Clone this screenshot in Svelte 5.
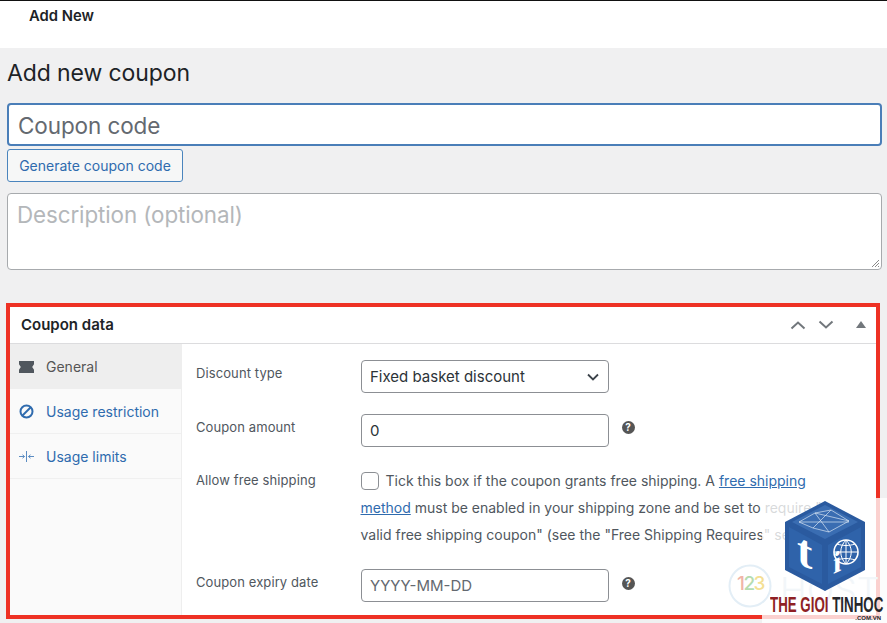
<script>
  const tabs = [
    { label: 'General', icon: 'ticket', active: true },
    { label: 'Usage restriction', icon: 'ban' },
    { label: 'Usage limits', icon: 'limits' }
  ];
</script>

<div class="page">
  <header class="topbar"><span>Add New</span></header>
  <main class="wrap">
    <h1>Add new coupon</h1>
    <div class="code-input">Coupon code</div>
    <button class="gen">Generate coupon code</button>
    <div class="desc">
      <span>Description (optional)</span>
      <svg class="grip" width="10" height="10" viewBox="0 0 10 10"><path d="M9 2 2 9M9 5 5 9M9 8 8 9" stroke="#8a8a8a" fill="none"/></svg>
    </div>

    <section class="box">
      <div class="box-head">
        <h2>Coupon data</h2>
        <div class="controls">
          <svg width="16" height="10" viewBox="0 0 16 10"><path d="M1.5 8.5 8 2.5l6.5 6" fill="none" stroke="#72777c" stroke-width="2"/></svg>
          <svg width="16" height="10" viewBox="0 0 16 10"><path d="M1.5 1.500 8 7.500l6.500-6" fill="none" stroke="#72777c" stroke-width="2"/></svg>
          <svg class="tri" width="10" height="7" viewBox="0 0 10 7"><path d="M5 0l5 7H0z" fill="#72777c"/></svg>
        </div>
      </div>
      <div class="box-body">
        <nav class="tabs">
          {#each tabs as t}
            <div class="tab" class:active={t.active}>
              <span class="ico">
                {#if t.icon === 'ticket'}
                  <svg width="15" height="12" viewBox="0 0 15 12"><path d="M0 0h15v3.200L13.200 6 15 8.800V12H0V8.800L1.800 6 0 3.200z" fill="#50575e"/></svg>
                {:else if t.icon === 'ban'}
                  <svg width="15" height="15" viewBox="0 0 15 15"><circle cx="7.500" cy="7.500" r="6" fill="none" stroke="#2f6bae" stroke-width="2"/><path d="M3.500 11.500l8-8" stroke="#2f6bae" stroke-width="2"/></svg>
                {:else}
                  <svg width="15" height="13" viewBox="0 0 15 13"><path d="M7.500 1v11M0 6.500h5.500M9.500 6.500H15M3.500 4.800l2 1.700-2 1.700M11.500 4.800l-2 1.700 2 1.700" fill="none" stroke="#5b8cc2"/></svg>
                {/if}
              </span>
              <span>{t.label}</span>
            </div>
          {/each}
        </nav>
        <div class="panel">
          <div class="row r1">
            <span class="lbl">Discount type</span>
            <div class="field select">
              <span>Fixed basket discount</span>
              <svg width="12" height="8" viewBox="0 0 12 8"><path d="M1 1.500l5 5 5-5" fill="none" stroke="#3c434a" stroke-width="1.800"/></svg>
            </div>
          </div>
          <div class="row r2">
            <span class="lbl">Coupon amount</span>
            <div class="field">0</div>
            <span class="help">?</span>
          </div>
          <div class="row r3">
            <span class="lbl">Allow free shipping</span>
            <p class="tick">
              <span class="check"></span>Tick this box if the coupon grants free shipping. A <a href="#a">free shipping method</a> must be enabled in your shipping zone and be set to require "a valid free shipping coupon" (see the "Free Shipping Requires" setting).
            </p>
          </div>
          <div class="row r4">
            <span class="lbl">Coupon expiry date</span>
            <div class="field ph">YYYY-MM-DD</div>
            <span class="help">?</span>
          </div>
        </div>
      </div>
    </section>
  </main>

  <div class="watermark">
    <div class="host">
      <svg width="46" height="46" viewBox="0 0 46 46"><circle cx="23" cy="23" r="20.500" fill="none" stroke="#e3eef6" stroke-width="2"/></svg>
      <span class="n123"><i class="a">1</i><i class="b">2</i><i class="c">3</i></span>
    </div>
    <span class="hosttext">HOST</span>
    <svg class="cube" width="80" height="90" viewBox="0 0 80 90">
      <path d="M40 0 80 21v48L40 90 0 69V21z" fill="#2a5a9f"/>
      <path d="M40 4 73 21 40 38 7 21z" fill="#3a6db2"/>
      <path d="M4 26 37 44v39L4 66z" fill="#2f63aa"/>
      <path d="M76 26 43 44v39l33-17z" fill="#2f63aa"/>
      <path d="M14 21 30 12 46 9 64 20 44 31 28 27zM30 12 44 31M46 9 28 27M14 21H64M30 12 64 20" fill="none" stroke="#d7e4f2" stroke-width=".7"/>
      <text class="logo-t" transform="matrix(1 .45 0 1 12 62)">t</text>
      <circle cx="61" cy="51" r="12" fill="none" stroke="#fff" stroke-width="1.600"/>
      <path d="M61 39v24M49 51h24M52 43c6 2 12 2 18 0M52 59c6-2 12-2 18 0M61 39c-7 7-7 17 0 24M61 39c7 7 7 17 0 24" fill="none" stroke="#fff" stroke-width="1"/>
      <text class="logo-i" transform="matrix(1 -.45 0 1 48 73)">i</text>
    </svg>
    <div class="brand"><b>THE GIOI</b> <b class="dark">TINHOC</b></div>
    <div class="vn">.COM.VN</div>
  </div>
</div>

<style>
  :global(body) { margin: 0; background: #f0f0f1; }
  .page {
    position: relative;
    width: 887px;
    height: 623px;
    overflow: hidden;
    font-family: Inter, "Liberation Sans", sans-serif;
    color: #3c434a;
    background: #f0f0f1;
  }
  .topbar {
    box-sizing: border-box;
    height: 48px;
    background: #fff;
    border-top: 1px solid #111;
    padding: 7px 0 0 29px;
    font-size: 14.800px;
    line-height: 16px;
    font-weight: 600;
    color: #1d2327;
  }
  .wrap { padding: 0 5px 0 7px; }
  h1 {
    margin: 11px 0 0;
    font-size: 23px;
    line-height: 29px;
    font-weight: 400;
    color: #1d2327;
    letter-spacing: -0.1px;
  }
  .code-input {
    box-sizing: border-box;
    height: 43px;
    margin-top: 15px;
    padding-left: 9px;
    background: #fff;
    border: 2px solid #4a7eb8;
    border-radius: 4px;
    font-size: 22.500px;
    line-height: 41px;
    color: #646970;
    letter-spacing: -0.1px;
  }
  .gen {
    display: block;
    box-sizing: border-box;
    width: 176px;
    height: 33px;
    margin-top: 3px;
    padding: 0;
    background: #f6f7f7;
    border: 1px solid #4a84bd;
    border-radius: 3px;
    font: 14px Inter, "Liberation Sans", sans-serif;
    color: #2f6bae;
  }
  .desc {
    position: relative;
    box-sizing: border-box;
    height: 77px;
    margin-top: 11px;
    padding: 7px 0 0 9px;
    background: #fff;
    border: 1px solid #a7aaad;
    border-radius: 4px;
    font-size: 22.400px;
    line-height: 28px;
    color: #b4b7ba;
    letter-spacing: -0.1px;
  }
  .grip { position: absolute; right: 1px; bottom: 1px; }
  .box {
    box-sizing: border-box;
    width: 874px;
    height: 316px;
    margin-top: 33px;
    margin-left: -1px;
    background: #fff;
    border: 4px solid #ee3124;
    overflow: hidden;
  }
  .box-head {
    display: flex;
    align-items: center;
    justify-content: space-between;
    box-sizing: border-box;
    height: 37px;
    padding: 0 10px 1px 11px;
    border-bottom: 1px solid #dcdcde;
  }
  h2 { margin: 0; font-size: 15px; font-weight: 600; color: #1d2327; }
  .controls { display: flex; align-items: center; gap: 12px; }
  .tri { margin-left: 10px; }
  .box-body { display: flex; height: 273px; }
  .tabs {
    flex: 0 0 171px;
    background: #fafafa;
    border-right: 1px solid #eee;
  }
  .tab {
    display: flex;
    align-items: center;
    box-sizing: border-box;
    height: 45px;
    padding: 0 0 0 9px;
    font-size: 14px;
    color: #2f6bae;
    border-bottom: 1px solid #f0f0f0;
  }
  .tab.active { background: #eeeeee; color: #555; border-bottom: 0; }
  .ico { display: flex; width: 27px; }
  .panel { flex: 1; padding-left: 14px; font-size: 13px; }
  .row { display: flex; align-items: flex-start; position: relative; }
  .lbl { flex: 0 0 164.500px; line-height: 16px; color: #50575e; letter-spacing: .1px; }
  .r1 { margin-top: 16px; height: 54px; }
  .r1 .lbl { padding-top: 5px; }
  .r2 { height: 55px; }
  .r2 .lbl { padding-top: 5px; }
  .r2 .help { margin-top: 7px; }
  .r3 { height: 100px; }
  .r3 .lbl { padding-top: 3px; }
  .r4 .lbl { padding-top: 5px; }
  .r4 .help { margin-top: 8px; }
  .field {
    box-sizing: border-box;
    width: 248px;
    height: 33px;
    padding-left: 8.500px;
    border: 1px solid #8c8f94;
    border-radius: 4px;
    font-size: 15px;
    line-height: 31px;
    color: #2c3338;
    background: #fff;
  }
  .select { display: flex; justify-content: space-between; align-items: center; padding-right: 9px; }
  .ph { color: #646970; }
  .help {
    box-sizing: border-box;
    width: 13px;
    height: 13px;
    margin-left: 13px;
    border-radius: 50%;
    background: #555;
    color: #fff;
    font-size: 10px;
    line-height: 13px;
    font-weight: 700;
    text-align: center;
  }
  .tick {
    margin: -2px 0 0;
    width: 490px;
    font-size: 14px;
    line-height: 27px;
    color: #50575e;
  }
  .tick a { color: #2f6bae; text-decoration: underline; }
  .check {
    display: inline-block;
    box-sizing: border-box;
    width: 18px;
    height: 18px;
    margin-right: 7px;
    vertical-align: -4px;
    border: 1px solid #8c8f94;
    border-radius: 4px;
    background: #fff;
  }
  .watermark {
    position: absolute;
    left: 762px;
    top: 498px;
    width: 125px;
    height: 125px;
    background: rgba(255, 255, 255, .78);
  }
  .host { position: absolute; left: -35px; top: 65px; width: 46px; height: 46px; }
  .n123 {
    position: absolute;
    left: 10px;
    top: 9px;
    font-size: 19px;
    line-height: 24px;
    font-weight: 500;
    letter-spacing: -1.500px;
  }
  .n123 i { font-style: normal; }
  .a { color: #f0b5a8; } .b { color: #b5dcb0; } .c { color: #f4df94; }
  .hosttext {
    position: absolute;
    left: 18px;
    top: 72px;
    font-size: 36px;
    line-height: 40px;
    font-weight: 300;
    color: #f2f6f9;
  }
  .cube { position: absolute; left: 23px; top: 3px; }
  .logo-t { font: 700 46px "Liberation Serif", serif; fill: #fff; }
  .logo-i { font: 700 30px "Liberation Serif", serif; fill: #fff; }
  .brand {
    position: absolute;
    left: 8px;
    top: 97px;
    white-space: nowrap;
    font: 700 21.500px/20px "Liberation Sans", sans-serif;
    transform: scaleX(.62);
    transform-origin: left;
    color: #8f1f24;
  }
  .dark { color: #26262b; }
  .vn {
    position: absolute;
    right: 6px;
    top: 116px;
    font: 700 6px/8px "Liberation Sans", sans-serif;
    color: #26262b;
  }
</style>
